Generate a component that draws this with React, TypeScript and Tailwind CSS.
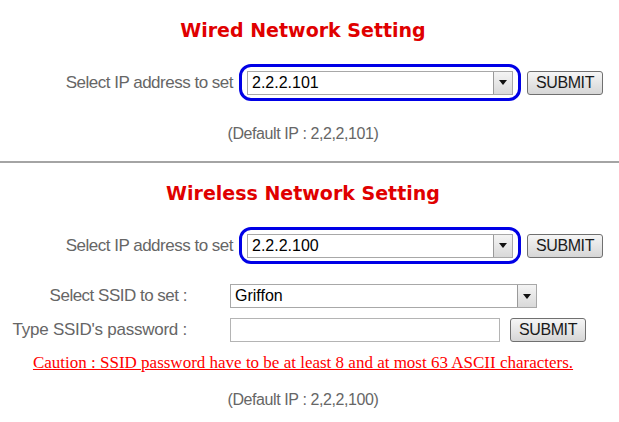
import React from 'react'

const Arrow = () => (
  <div className="flex h-full w-[19px] items-center justify-center border-l border-[#9a9a9a] bg-gradient-to-b from-[#f4f4f4] to-[#d9d9d9]">
    <svg width="8" height="5" viewBox="0 0 8 5">
      <path d="M0 0h8L4 5z" fill="#111" />
    </svg>
  </div>
)

const Select = ({ value, className }: { value: string; className: string }) => (
  <div className={`flex items-stretch border border-[#a8a8a8] bg-white ${className}`}>
    <div className="flex flex-1 items-center pl-[4px] font-['Liberation_Sans',Arial,sans-serif] text-[16px] tracking-normal text-black">
      {value}
    </div>
    <Arrow />
  </div>
)

const SubmitButton = ({ className = '' }: { className?: string }) => (
  <button
    className={`flex h-[24px] w-[76px] items-center justify-center rounded-[3px] border border-[#707070] bg-gradient-to-b from-[#f6f6f6] to-[#d6d6d6] font-['Liberation_Sans',Arial,sans-serif] text-[16px] tracking-[-0.4px] text-[#1a1a1a] ${className}`}
  >
    SUBMIT
  </button>
)

const Title = ({ children }: { children: React.ReactNode }) => (
  <h2 className="text-center font-['DejaVu_Sans',Verdana,sans-serif] text-[19px] font-bold leading-[24px] tracking-normal text-[#e00000]">
    {children}
  </h2>
)

const IpRow = ({ value, className }: { value: string; className: string }) => (
  <div className={`flex items-center ${className}`}>
    <div className="w-[233px] text-right">Select IP address to set</div>
    <div className="ml-[6px] flex h-[37px] w-[282px] items-center rounded-[12px] border-[3px] border-[#0000e6] px-[5px]">
      <Select value={value} className="h-[24px] w-full" />
    </div>
    <SubmitButton className="ml-[6px]" />
  </div>
)

export default function App() {
  return (
    <div className="h-[422px] w-[619px] bg-white font-['Liberation_Sans',Arial,sans-serif] text-[17px] leading-[20px] tracking-[-0.5px] text-[#666]">
      <div className="w-[606px] pt-[18px]">
        <Title>Wired Network Setting</Title>
        <IpRow value="2.2.2.101" className="mt-[22px]" />
        <p className="mt-[23px] text-center text-[16px] tracking-[-0.4px]">(Default IP : 2,2,2,101)</p>
      </div>

      <div className="mt-[17px] h-[2px] w-full bg-[#a4a4a4]" />

      <div className="w-[606px]">
        <Title>
          <span className="mt-[18px] block">Wireless Network Setting</span>
        </Title>
        <IpRow value="2.2.2.100" className="mt-[22px]" />

        <div className="mt-[20px] flex h-[24px] items-center">
          <div className="w-[187px] text-right">Select SSID to set :</div>
          <Select value="Griffon" className="ml-[43px] h-[24px] w-[307px]" />
        </div>

        <div className="mt-[10px] flex h-[24px] items-center">
          <div className="w-[187px] text-right tracking-[-0.25px]">Type SSID's password :</div>
          <input className="ml-[43px] h-[24px] w-[270px] border border-[#b4b4b4] bg-white outline-none" />
          <SubmitButton className="ml-[10px]" />
        </div>

        <p className="mt-[11px] text-center font-['Liberation_Serif',serif] text-[17px] tracking-normal text-[#ff0000] underline">
          Caution : SSID password have to be at least 8 and at most 63 ASCII characters.
        </p>

        <p className="mt-[17px] text-center text-[16px] tracking-[-0.4px]">(Default IP : 2,2,2,100)</p>
      </div>
    </div>
  )
}
